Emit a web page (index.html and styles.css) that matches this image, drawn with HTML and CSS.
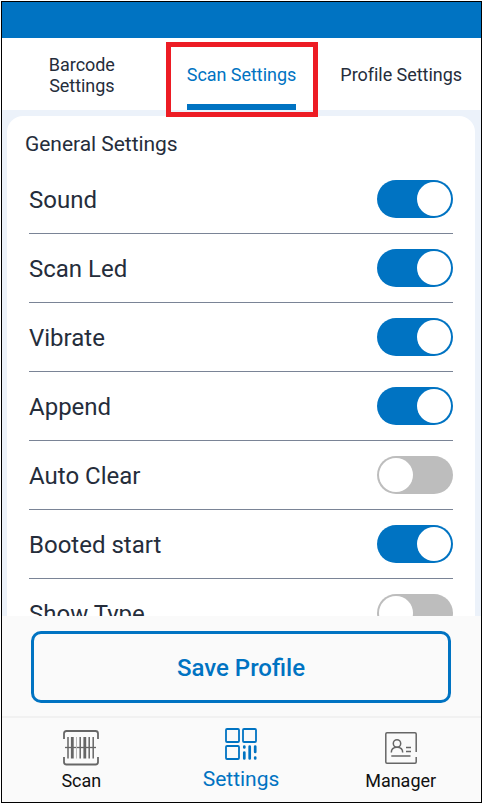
FILE: index.html
```html
<!DOCTYPE html>
<html lang="en">
<head>
<meta charset="utf-8">
<title>Scan Settings</title>
<link rel="stylesheet" href="styles.css">
</head>
<body>
<div class="screen">
  <header class="status-bar"></header>
  <nav class="tabs">
    <a class="tab tab-barcode">Barcode<br>Settings</a>
    <a class="tab tab-scan"><span>Scan Settings</span></a>
    <a class="tab tab-profile">Profile Settings</a>
    <div class="highlight"></div>
  </nav>
  <main class="content">
    <section class="card">
      <h1>General Settings</h1>
      <div class="row"><span>Sound</span><i class="toggle on"></i></div>
      <div class="row"><span>Scan Led</span><i class="toggle on"></i></div>
      <div class="row"><span>Vibrate</span><i class="toggle on"></i></div>
      <div class="row"><span>Append</span><i class="toggle on"></i></div>
      <div class="row"><span>Auto Clear</span><i class="toggle"></i></div>
      <div class="row"><span>Booted start</span><i class="toggle on"></i></div>
      <div class="row"><span>Show Type</span><i class="toggle"></i></div>
    </section>
  </main>
  <div class="actions"><button class="save">Save Profile</button></div>
  <nav class="bottom-nav">
    <a class="item">
      <svg width="36" height="36" viewBox="0 0 36 36" fill="none" stroke="#666">
        <path stroke-width="1.8" d="M1 9V3.500Q1 1 3.500 1H32.500Q35 1 35 3.500V9M1 27V32Q1 34.500 3.500 34.500H32.500Q35 34.500 35 32V27"/>
        <path stroke-width="1.3" d="M2 17.500H33"/>
        <path stroke-width="1.500" d="M5 7V28.500M17.200 7V28.500M26.200 7V28.500M30.200 7V28.500"/>
        <path stroke-width="2.800" d="M9.300 7V28.500M21.800 7V28.500"/>
        <path stroke="#bbb" d="M13.500 7V28.500"/>
      </svg>
      <span>Scan</span>
    </a>
    <a class="item active">
      <svg width="34" height="34" viewBox="0 0 34 34" fill="none" stroke="#0073c2" stroke-width="1.8">
        <rect x="2" y="2" width="13" height="13" rx="1"/>
        <rect x="19" y="2" width="13" height="13" rx="1"/>
        <rect x="2" y="19" width="13" height="13" rx="1"/>
        <path stroke-width="2.700" stroke-linecap="round" d="M20.300 19.500V20.500M20.300 25.500V31.500M25.700 19.500V31.500M31.200 19.500V25M31.200 30.500V31.500"/>
      </svg>
      <span>Settings</span>
    </a>
    <a class="item">
      <svg width="34" height="34" viewBox="0 0 34 34" fill="none" stroke="#666" stroke-width="1.5">
        <path d="M32.200 21V3Q32.200 1.800 31 1.800H3Q1.800 1.800 1.800 3V31Q1.800 32.200 3 32.200H31Q32.200 32.200 32.200 31V26"/>
        <circle cx="13" cy="12.500" r="3.700"/>
        <path d="M7.300 21.500C7.300 18 9.500 16.200 13 16.200S18.700 18 18.700 21.500M7.300 25H26.500M22 16.500H27M22 20.500H27"/>
      </svg>
      <span>Manager</span>
    </a>
  </nav>
</div>
</body>
</html>
```
FILE: styles.css
```css
* { box-sizing: border-box; }
body {
  margin: 0;
  padding: 1px;
  background: #fff;
  font-family: Roboto, "Liberation Sans", sans-serif;
  color: #252d3b;
}
.screen {
  width: 481px;
  height: 802px;
  border: 1px solid #000;
  display: flex;
  flex-direction: column;
  overflow: hidden;
}
.status-bar { height: 36px; flex: none; background: #0073c2; }
.tabs {
  height: 72px;
  flex: none;
  display: flex;
  position: relative;
  background: #fff;
  font-size: 18px;
  line-height: 21px;
  letter-spacing: -0.04px;
}
.tab {
  flex: 1;
  display: flex;
  align-items: center;
  justify-content: center;
  text-align: center;
  padding-top: 2px;
}
.tab-profile { padding-top: 1px; }
.tab-scan span {
  height: 70px;
  line-height: 70px;
  border-bottom: 6px solid #0073c2;
  color: #0073c2;
}
.highlight {
  position: absolute;
  left: 164px;
  top: 4px;
  width: 152px;
  height: 75px;
  border: 5px solid #ed1c24;
}
.content {
  height: 506px;
  flex: none;
  overflow: hidden;
  background: #ecf2fa;
  padding: 6px 6px 0 5px;
}
.card {
  background: #fff;
  border-radius: 16px 16px 0 0;
  padding: 0 22px;
}
h1 {
  margin: 0 0 0 -4px;
  height: 49px;
  padding-top: 16px;
  font-size: 21px;
  line-height: 24px;
  font-weight: 400;
  letter-spacing: -0.04px;
}
.row {
  height: 69px;
  display: flex;
  align-items: center;
  justify-content: space-between;
  border-bottom: 1px solid #7a8496;
  font-size: 24px;
}
.row span { padding-top: 2px; }
.toggle {
  width: 76px;
  height: 38px;
  border-radius: 19px;
  background: #bdbdbd;
  padding: 2px;
}
.toggle::before {
  content: "";
  display: block;
  width: 34px;
  height: 34px;
  border-radius: 50%;
  background: #fff;
}
.toggle.on { background: #0073c2; }
.toggle.on::before { margin-left: auto; }
.actions {
  height: 100px;
  flex: none;
  background: #fafafa;
  padding: 15px 30px 13px 29px;
}
.save {
  display: block;
  width: 100%;
  height: 72px;
  border: 3px solid #0073c2;
  border-radius: 10px;
  background: transparent;
  color: #0073c2;
  font: 500 24px Roboto, sans-serif;
  padding: 2px 0 0;
}
.bottom-nav {
  flex: 1;
  display: flex;
  background: #fafafa;
  border-top: 2px solid #f1f1f1;
  font-size: 18px;
  color: #111;
  padding-right: 1px;
}
.item {
  flex: 1;
  display: flex;
  flex-direction: column;
  align-items: center;
  padding: 12px 1px 0 0;
}
.item svg { flex: none; }
.item span { line-height: 22px; margin-top: 4px; }
.item.active { color: #0073c2; font-size: 21px; padding-top: 9px; }
.item.active span { margin-top: 7px; }
.item:last-child { padding: 13px 0 0; }
.item:last-child span { margin-top: 5px; }
```
